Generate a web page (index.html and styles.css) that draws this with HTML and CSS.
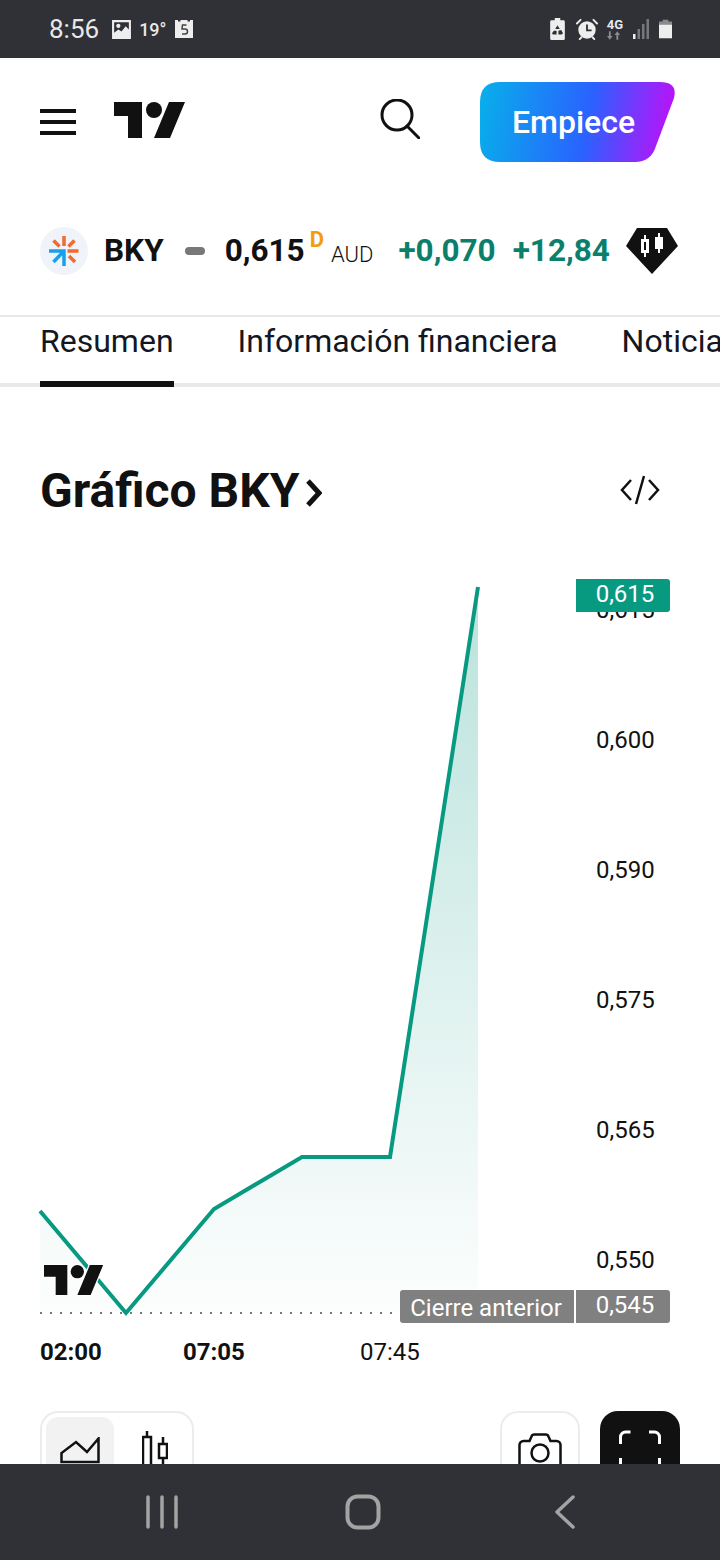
FILE: index.html
```html
<!DOCTYPE html>
<html lang="es">
<head>
    <meta charset="UTF-8">
    <meta name="viewport" content="width=device-width, initial-scale=1.0">
    <title>BKY | Gráfico</title>
    <link rel="stylesheet" href="styles.css">
</head>
<body>
    <div class="status-bar">
        <div class="status-group">
            <span class="status-time">8:56</span>
            <svg class="status-picture" viewBox="0 0 20 20">
                <path fill="#eee" fill-rule="evenodd" d="M1 1h18v18H1zM3 3v10l4-3 3 2 4-5 3 3V3zM7 4.500a2 2 0 1 1-.01 0z"/>
            </svg>
            <span class="status-temp">19°</span>
            <svg class="status-cal" viewBox="0 0 20 20">
                <path fill="#eee" d="M1 1h3v1.500h2.500V1h7v1.500H16V1h3v18H1z"/>
                <path fill="none" stroke="#444" stroke-width="1.500" d="M12.500 6H8.500L8 10h3a2 2 0 0 1 0 5H8"/>
            </svg>
        </div>
        <div class="status-group status-right">
            <svg class="status-batt-saver" viewBox="0 0 16 24">
                <path fill="#eee" d="M5 0h6v2.500h3.500a1.500 1.500 0 0 1 1.500 1.500v18.500a1.500 1.500 0 0 1-1.500 1.500h-13A1.500 1.500 0 0 1 0 22.500V4a1.500 1.500 0 0 1 1.500-1.500H5z"/>
                <path fill="#303136" d="M8 8l2.500 4H5.500zM4 14h3v4H3l-1-1.500zM9 14l3-1 2 3.500-1.500 1.500H9z"/>
            </svg>
            <svg class="status-alarm" viewBox="0 0 24 24">
                <circle cx="12" cy="13" r="9.500" fill="#eee"/>
                <path fill="none" stroke="#303136" stroke-width="2" d="M12 7v6.500h5"/>
                <path fill="none" stroke="#eee" stroke-width="2" stroke-linecap="round" d="M1 6l4-4M23 6l-4-4M4 23l2-2M20 23l-2-2"/>
            </svg>
            <span class="status-net">4G<svg viewBox="0 0 16 9"><path fill="#8a8b8e" d="M3 9L0 5h2V0h2v5h2zM11 0l3 4h-2v5h-2V4H8z"/></svg></span>
            <svg class="status-signal" viewBox="0 0 16 20">
                <rect x="0" y="15" width="2.500" height="5" fill="#eee"/>
                <rect x="4.500" y="10" width="2.500" height="10" fill="#77787b"/>
                <rect x="9" y="5" width="2.500" height="15" fill="#77787b"/>
                <rect x="13.500" y="0" width="2.500" height="20" fill="#77787b"/>
            </svg>
            <svg class="status-batt" viewBox="0 0 14 20">
                <path fill="#eee" d="M0 5h14v15H0z"/>
                <path fill="#8a8b8e" d="M4 0h6v2h4v3H0V2h4z"/>
            </svg>
        </div>
    </div>

    <main class="page">
        <header class="top-nav">
            <div class="menu-icon"><span></span><span></span><span></span></div>
            <svg class="logo" viewBox="0 4 36 18">
                <path d="M14 22H7V11H0V4h14v18zM28 22h-8l7.500-18h8L28 22z"/>
                <circle cx="20" cy="8" r="4"/>
            </svg>
            <svg class="search-icon" viewBox="0 0 40 40">
                <circle cx="17" cy="16" r="15" fill="none" stroke="#111" stroke-width="3"/>
                <path stroke="#111" stroke-width="3" stroke-linecap="round" d="M27 27l12 12"/>
            </svg>
            <a class="start-btn">Empiece</a>
        </header>

        <section class="symbol-row">
            <svg class="symbol-logo" viewBox="0 0 48 48">
                <circle cx="24" cy="24" r="24" fill="#f0f3fa"/>
                <g stroke-width="3.500" stroke="#f26b2d" fill="none">
                    <path d="M24 9v10M13.500 13.500l6 6M34.500 13.500l-6 6M27.500 24h11M29 29l6 6"/>
                </g>
                <g stroke-width="3.500" stroke="#1a9fe8" fill="none">
                    <path d="M9 24h15v15M13.500 35l10.500-11"/>
                </g>
            </svg>
            <span class="symbol-name">BKY</span>
            <span class="symbol-dash"></span>
            <span class="symbol-price">0,615</span>
            <sup class="symbol-delay">D</sup>
            <span class="symbol-cur">AUD</span>
            <span class="symbol-change">+0,070</span>
            <span class="symbol-change pct">+12,84</span>
            <svg class="symbol-gem" viewBox="0 0 52 46">
                <path fill="#111" d="M11 0h30l11 18-26 28L0 18z"/>
                <path fill="#fff" d="M18 7h2v4h3v14h-3v4h-2v-4h-3V11h3zM18 14v8h2v-8zM32 5h2v4h3v12h-3v4h-2v-4h-3V9h3z"/>
            </svg>
        </section>

        <nav class="tabs">
            <span class="tab active">Resumen</span>
            <span class="tab">Información financiera</span>
            <span class="tab">Noticias</span>
        </nav>

        <section class="chart-head">
            <h2>Gráfico BKY</h2>
            <svg class="chart-head-arrow" viewBox="0 0 16 28">
                <path fill="none" stroke="#111" stroke-width="5" d="M2 2l11 12L2 26"/>
            </svg>
            <svg class="embed-icon" viewBox="0 0 40 30">
                <path fill="none" stroke="#111" stroke-width="2.500" d="M11 5L2 15l9 10M29 5l9 10-9 10M24 1l-8 28"/>
            </svg>
        </section>

        <section class="chart">
            <svg class="chart-plot" viewBox="0 0 720 800">
                <defs>
                    <linearGradient id="area-fill" x1="0" y1="0" x2="0" y2="1">
                        <stop offset="0" stop-color="#089981" stop-opacity=".28"/>
                        <stop offset="1" stop-color="#089981" stop-opacity=".01"/>
                    </linearGradient>
                </defs>
                <path fill="url(#area-fill)" d="M40 651L126 753L214 649L302 597H390L478 27V753H40z"/>
                <path fill="none" stroke="#089981" stroke-width="4" d="M40 651L126 753L214 649L302 597H390L478 27"/>
                <path stroke="#777" stroke-width="2" stroke-dasharray="2 8" d="M40 753H396"/>
                <svg x="44" y="705" width="60" height="30" viewBox="0 4 36 18" overflow="visible">
                    <g fill="#111" stroke="#fff" stroke-width="1.500" paint-order="stroke">
                        <path d="M14 22H7V11H0V4h14v18zM28 22h-8l7.500-18h8L28 22z"/>
                        <circle cx="20" cy="8" r="4"/>
                    </g>
                </svg>
            </svg>

            <span class="y-label y-615">0,615</span>
            <span class="y-label y-600">0,600</span>
            <span class="y-label y-590">0,590</span>
            <span class="y-label y-575">0,575</span>
            <span class="y-label y-565">0,565</span>
            <span class="y-label y-550">0,550</span>

            <span class="price-tag last">0,615</span>
            <span class="price-tag prev-text">Cierre anterior</span>
            <span class="price-tag prev-value">0,545</span>

            <div class="x-axis">
                <span class="x-label bold">02:00</span>
                <span class="x-label bold">07:05</span>
                <span class="x-label">07:45</span>
            </div>
        </section>

        <section class="chart-tools">
            <div class="tool-group">
                <span class="tool-tile selected">
                    <svg viewBox="0 0 40 40"><path fill="none" stroke="#111" stroke-width="2.500" d="M1.500 25V16L16 5l11 10L38.500 1.500V25z"/></svg>
                </span>
                <span class="tool-tile">
                    <svg viewBox="0 0 26 48"><path fill="none" stroke="#111" stroke-width="2.500" d="M5 0v6M1 6h8v40H1zM21 6v7M17 13h8v14h-8zM21 27v7"/></svg>
                </span>
            </div>
            <span class="tool-btn camera">
                <svg viewBox="0 0 44 40"><path fill="none" stroke="#111" stroke-width="2.500" d="M1.500 40V12a4 4 0 0 1 4-4h6l2-4.500a3 3 0 0 1 3-2h11a3 3 0 0 1 3 2l2 4.500h6a4 4 0 0 1 4 4v28"/><circle cx="22" cy="20" r="8.500" fill="none" stroke="#111" stroke-width="2.500"/></svg>
            </span>
            <span class="tool-btn full">
                <svg viewBox="0 0 42 40"><path fill="none" stroke="#fff" stroke-width="3" d="M1.500 14V7a5 5 0 0 1 5-5h5M30 2h5.500a5 5 0 0 1 5 5v7M1.500 28v12M40.500 28v12"/></svg>
            </span>
        </section>
    </main>

    <div class="nav-bar">
        <svg class="nav-recent" viewBox="0 0 32 34"><path stroke="#a3a3a3" stroke-width="3.500" stroke-linecap="round" d="M2 2v30M16 2v30M30 2v30"/></svg>
        <svg class="nav-home" viewBox="0 0 36 36"><rect x="2.500" y="2.500" width="31" height="31" rx="10" fill="none" stroke="#a3a3a3" stroke-width="4"/></svg>
        <svg class="nav-back" viewBox="0 0 20 34"><path fill="none" stroke="#a3a3a3" stroke-width="3.500" stroke-linecap="round" stroke-linejoin="round" d="M18 2L2 17l16 15"/></svg>
    </div>
</body>
</html>
```

FILE: styles.css
```css
* {
    box-sizing: border-box;
}

html, body {
    height: 100%;
}

body {
    display: flex;
    flex-direction: column;
    margin: 0;
    width: 720px;
    height: 1560px;
    overflow: hidden;
    background-color: #fff;
    color: #111;
    font-family: Roboto, sans-serif;
}

svg {
    display: block;
    flex-shrink: 0;
}

/* status bar */
.status-bar {
    display: flex;
    align-items: center;
    justify-content: space-between;
    flex-shrink: 0;
    height: 58px;
    padding: 0 48px 0 49px;
    background-color: #303136;
    color: #e8e8e8;
}

.status-group {
    display: flex;
    align-items: center;
}

.status-time {
    font-size: 26px;
    margin-right: 12px;
}

.status-picture {
    width: 21px;
    height: 21px;
}

.status-temp {
    font-size: 18px;
    font-weight: 500;
    margin: 0 8px 0 7px;
}

.status-cal {
    width: 20px;
    height: 20px;
}

.status-batt-saver {
    width: 15px;
    height: 22px;
    margin-right: 11px;
}

.status-alarm {
    width: 22px;
    height: 22px;
    margin-right: 9px;
}

.status-net {
    display: flex;
    flex-direction: column;
    align-items: center;
    font-size: 13px;
    line-height: 12px;
    font-weight: 700;
    margin-right: 9px;
}

.status-net svg {
    width: 15px;
    height: 9px;
}

.status-signal {
    width: 18px;
    height: 20px;
    margin-right: 9px;
}

.status-batt {
    width: 13px;
    height: 20px;
}

.page {
    flex: 1;
    min-height: 0;
    overflow: hidden;
}

/* top nav */
.top-nav {
    display: flex;
    align-items: center;
    height: 128px;
    padding: 0 45px 0 40px;
}

.menu-icon {
    display: flex;
    flex-direction: column;
    gap: 7px;
    width: 36px;
    margin-right: 37px;
}

.menu-icon span {
    height: 4px;
    background-color: #111;
}

.logo {
    width: 72px;
    height: 36px;
    margin: -4px 0 0 1px;
    fill: #111;
}

.search-icon {
    width: 40px;
    height: 40px;
    margin: -6px 60px 0 auto;
}

.start-btn {
    display: flex;
    align-items: center;
    justify-content: center;
    width: 195px;
    height: 80px;
    padding-right: 8px;
    background: linear-gradient(100deg, #07b0ea 0%, #2a62ff 55%, #cc08f8 100%);
    clip-path: path("M20 0H180Q198 0 194 16L176 64Q171 80 155 80H20Q0 80 0 60V20Q0 0 20 0Z");
    color: #fff;
    font-size: 32px;
    font-weight: 500;
}

/* symbol row */
.symbol-row {
    display: flex;
    align-items: center;
    height: 129px;
    padding: 0 0 0 40px;
    white-space: nowrap;
}

.symbol-logo {
    width: 48px;
    height: 48px;
    margin-right: 16px;
}

.symbol-name,
.symbol-price,
.symbol-change {
    font-size: 31.5px;
    font-weight: 700;
}

.symbol-dash {
    width: 20px;
    height: 8px;
    margin: 0 20px 0 21px;
    border-radius: 4px;
    background-color: #787878;
}

.symbol-delay {
    align-self: flex-start;
    margin: 43px 0 0 5px;
    color: #f29d0f;
    font-size: 22px;
    line-height: 22px;
    font-weight: 700;
}

.symbol-cur {
    margin: 8px 25px 0 7px;
    font-size: 22px;
    font-weight: 300;
}

.symbol-change {
    color: #0b7f6c;
}

.symbol-change.pct {
    margin-left: 17px;
}

.symbol-gem {
    width: 52px;
    height: 46px;
    margin-left: 16px;
}

/* tabs */
.tabs {
    display: flex;
    gap: 64px;
    height: 72px;
    padding-left: 40px;
    border-top: 2px solid #e9e9e9;
    border-bottom: 4px solid #e9e9e9;
    white-space: nowrap;
    overflow: visible;
}

.tab {
    height: 70px;
    padding-top: 4px;
    font-size: 32px;
    line-height: 40px;
    color: #131722;
    font-weight: 400;
}

.tab.active {
    border-bottom: 6px solid #111;
}

/* chart */
.chart-head {
    display: flex;
    align-items: center;
    height: 72px;
    margin: 67px 0 34px;
    padding: 0 60px 0 40px;
}

.chart-head h2 {
    margin: 0;
    font-size: 48px;
    font-weight: 700;
}

.chart-head-arrow {
    width: 16px;
    height: 28px;
    margin: 5px 0 0 7px;
}

.embed-icon {
    width: 40px;
    height: 30px;
    margin-left: auto;
}

.chart {
    position: relative;
    height: 850px;
}

.chart-plot {
    width: 720px;
    height: 800px;
}

.y-label {
    position: absolute;
    left: 596px;
    font-size: 24px;
    line-height: 28px;
}

.y-615 { top: 36px; }
.y-600 { top: 166px; }
.y-590 { top: 296px; }
.y-575 { top: 426px; }
.y-565 { top: 556px; }
.y-550 { top: 686px; }

.price-tag {
    position: absolute;
    height: 33px;
    color: #fff;
    font-size: 24px;
    line-height: 30px;
    text-align: center;
}

.price-tag.last {
    top: 19px;
    left: 576px;
    width: 94px;
    padding-left: 4px;
    background-color: #089981;
    border-radius: 0 3px 3px 0;
}

.price-tag.prev-text {
    top: 730px;
    left: 400px;
    width: 172px;
    background-color: #808080;
    border-radius: 3px 0 0 3px;
    box-sizing: content-box;
    padding-right: 2px;
    line-height: 36px;
}

.price-tag.prev-value {
    top: 730px;
    left: 576px;
    width: 94px;
    padding-left: 4px;
    background-color: #808080;
    border-radius: 0 3px 3px 0;
}

.x-axis {
    position: absolute;
    top: 778px;
    left: 40px;
    display: flex;
}

.x-label {
    width: 143px;
    font-size: 24px;
    line-height: 28px;
}

.x-label.bold {
    font-weight: 700;
}

.x-label:nth-child(2) {
    width: 177px;
}

/* tools under the chart */
.chart-tools {
    display: flex;
    align-items: flex-start;
    padding: 0 40px;
    margin-top: 1px;
}

.tool-group {
    display: flex;
    width: 154px;
    height: 80px;
    padding: 4px;
    border: 2px solid #ececec;
    border-radius: 18px;
    margin-right: auto;
}

.tool-tile {
    display: flex;
    width: 68px;
    height: 68px;
    padding: 20px 0 0 14px;
    border-radius: 12px;
}

.tool-tile.selected {
    background-color: #f2f2f2;
}

.tool-tile svg {
    width: 40px;
    height: 40px;
}

.tool-tile:last-child {
    padding: 14px 0 0 28px;
}

.tool-tile:last-child svg {
    width: 26px;
    height: 48px;
}

.tool-btn {
    display: flex;
    justify-content: center;
    width: 80px;
    height: 80px;
    padding-top: 20px;
    border-radius: 18px;
}

.tool-btn.camera {
    border: 2px solid #ececec;
    margin-right: 20px;
}

.tool-btn.camera svg {
    width: 44px;
    height: 40px;
}

.tool-btn.full {
    padding-top: 19px;
    background-color: #111;
}

.tool-btn.full svg {
    width: 42px;
    height: 40px;
}

/* android nav bar */
.nav-bar {
    display: flex;
    align-items: center;
    flex-shrink: 0;
    height: 96px;
    padding: 0 0 0 146px;
    background-color: #303136;
}

.nav-recent {
    width: 32px;
    height: 34px;
    margin-right: 167px;
}

.nav-home {
    width: 36px;
    height: 36px;
    margin-right: 174px;
}

.nav-back {
    width: 20px;
    height: 34px;
}
```
